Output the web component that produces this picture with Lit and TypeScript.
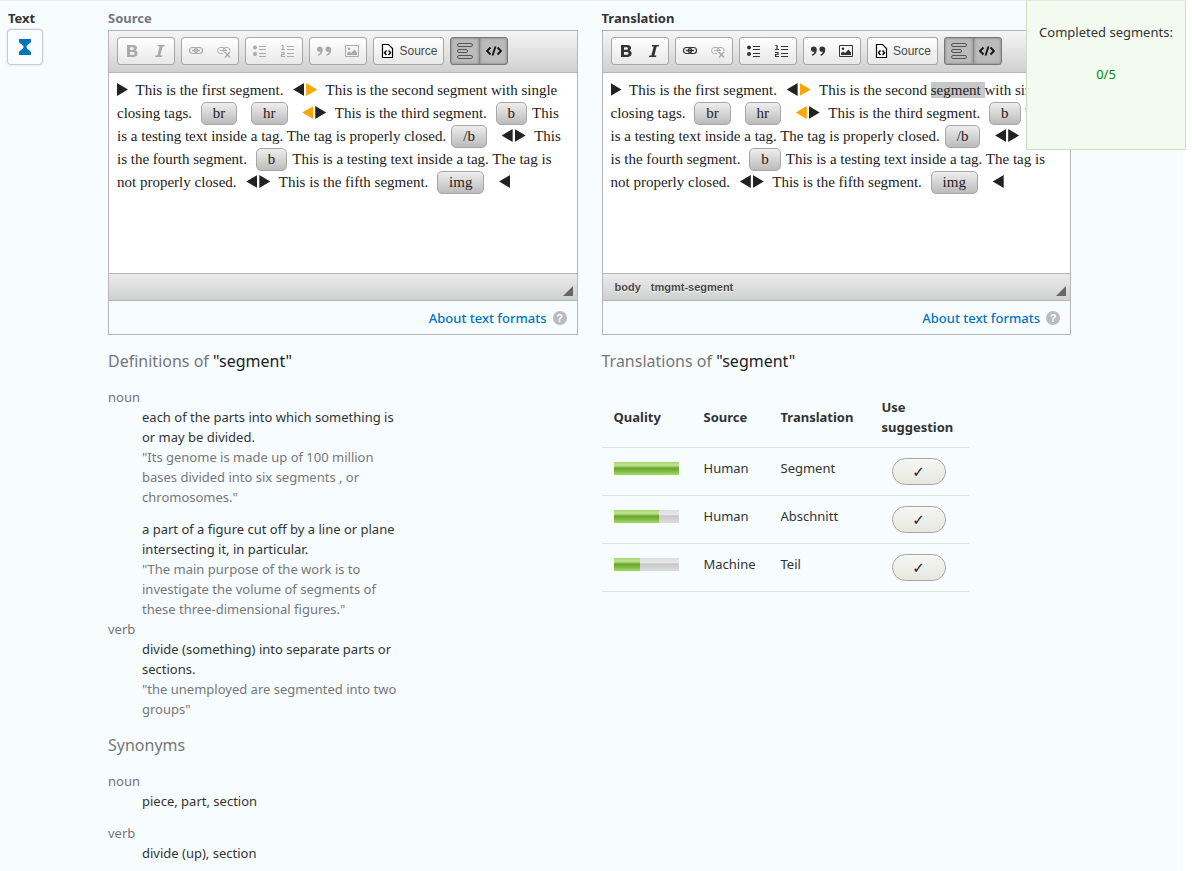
import { LitElement, html, css, svg, nothing, type TemplateResult } from "lit";
import { customElement, property } from "lit/decorators.js";

type Piece = string | TemplateResult;

const icon = (body: unknown) => html`<svg class="icon" viewBox="0 0 16 16" width="16" height="16" aria-hidden="true">${body}</svg>`;

const chain = svg`<g fill="none" stroke="currentColor" stroke-width="1.200"><rect x="1.500" y="4.500" width="8" height="6" rx="3"/><rect x="6.500" y="4.500" width="8" height="6" rx="3"/><path d="M4 7.500h8" stroke-width="1.600"/></g>`;

const icons = {
  bold: icon(svg`<path fill="currentColor" fill-rule="evenodd" d="M3 2h6c2.600 0 4 1.100 4 3 0 1.400-.8 2.200-2 2.600 1.700.3 2.600 1.400 2.600 2.900 0 2.300-1.700 3.500-4.400 3.500H3zM6 4.200v2.600h2.200c1.200 0 1.800-.4 1.800-1.300S9.400 4.200 8.200 4.200zM6 9v2.800h2.500c1.300 0 2-.5 2-1.400S9.800 9 8.500 9z"/>`),
  italic: icon(svg`<path fill="currentColor" d="M6 2h7l-.4 1.500h-1.900L8.300 12.500h2L10 14H3l.4-1.500h1.900L7.700 3.500h-2z"/>`),
  link: icon(chain),
  unlink: icon(svg`<g fill="none" stroke="currentColor"><path d="M7 10.500H4.500a3 3 0 0 1 0-6H7a3 3 0 0 1 2.500 3M9 9.500a3 3 0 0 1-2-2.500 2.800 2.800 0 0 1 3-2.500h1.500a3 3 0 0 1 2.500 3.500M4 7.500h7"/><path d="M9 9l5 5.500M14 9l-5 5.500" stroke-width="1.500"/></g>`),
  bullets: icon(svg`<circle cx="3" cy="4.500" r="2" fill="currentColor"/><circle cx="3" cy="11" r="2" fill="currentColor"/><path d="M7 3.500h7M7 6.500h7M7 10.500h7M7 13.500h7" stroke="currentColor"/>`),
  numbers: icon(svg`<path d="M1.500 2.500h1.500v4M1 6.500h4M1 9.500h3v2H1.500v2H5" fill="none" stroke="currentColor" stroke-width="1.200"/><path d="M7 3.500h7M7 6.500h7M7 10.500h7M7 13.500h7" stroke="currentColor"/>`),
  quote: icon(svg`<path fill="currentColor" d="M3.500 3.500c2 0 3.300 1.200 3.300 3.200 0 3-1.800 5.200-4.500 6l-.5-1c1.600-.7 2.400-1.500 2.500-2.900C2.300 9 .9 8 .9 6.200c0-1.600 1.100-2.700 2.600-2.700zM12 3.500c2 0 3.300 1.200 3.300 3.200 0 3-1.800 5.200-4.500 6l-.5-1c1.600-.7 2.400-1.500 2.500-2.900-2 .2-3.400-.8-3.400-2.600 0-1.600 1.100-2.700 2.600-2.700z"/>`),
  image: icon(svg`<path d="M1.500 2.500h13v11h-13z" fill="none" stroke="currentColor"/><circle cx="5" cy="5.800" r="1.300" fill="currentColor"/><path fill="currentColor" d="M3 12v-2l2-1.500 2 1.500 3.500-3.500L13 9.500V12z"/>`),
  source: icon(svg`<path d="M3.500 1.500h6l4 4v9h-10z" fill="#fff" stroke="#000" stroke-width="1.200"/><path d="M7.500 7.500L5.500 9.800l2 2.200M9.500 7.500l2 2.300-2 2.200" fill="none" stroke="#000" stroke-width="1.400"/>`),
  blocks: icon(svg`<g fill="none" stroke="#555"><rect x=".5" y=".5" width="15" height="3" rx="1.500"/><rect x=".5" y="6.500" width="10" height="3" rx="1.500"/><rect x=".5" y="12.500" width="15" height="3" rx="1.500"/></g>`),
  code: icon(svg`<path d="M4.500 4.500L1 8l3.500 3.500M11.500 4.500L15 8l-3.500 3.500M9.500 3.500l-3 9" fill="none" stroke="#111" stroke-width="1.800"/>`),
};

@customElement("segment-editor")
export class SegmentEditor extends LitElement {
  @property() label = "";
  @property({ type: Boolean }) active = false;
  @property({ attribute: false }) path: string[] = [];
  @property({ attribute: false }) content: Piece | Piece[] = "";

  static styles = css`
    :host { display: block; min-width: 0; }
    h2 { margin: 0; font-size: 13px; line-height: 20px; color: #777; }
    :host([active]) h2 { color: #333; }
    .frame { border: 1px solid #b6b6b6; margin-top: 2px; }
    .toolbar { display: flex; flex-wrap: nowrap; gap: 6px; padding: 6px 8px 7px; border-bottom: 1px solid #b6b6b6; background: linear-gradient(#f5f5f5, #cfd1cf); }
    .group { display: flex; box-sizing: border-box; height: 28px; border: 1px solid #a6a6a6; border-radius: 3px; background: linear-gradient(#fff, #e8e8e8); overflow: hidden; flex: none; }
    button { display: flex; align-items: center; justify-content: center; gap: 4px; width: 28px; padding: 0; border: 0; background: none; color: #333; font: 12px/18px "Liberation Sans", Arial, sans-serif; }
    button:disabled { color: #aaa; }
    button.wide { width: 69px; color: #484848; }
    .group.on { border-color: #777; background: #bbb; }
    .on button { box-shadow: inset 0 0 3px #777; }
    .on button + button { box-sizing: border-box; border-left: 1px solid #888; }
    .body { min-height: 200px; box-sizing: border-box; padding: 6px 8px; background: #fff; color: #222; font: 15px/23px "Liberation Serif", Georgia, serif; white-space: nowrap; overflow: hidden; }
    .status { display: flex; align-items: center; justify-content: space-between; height: 26px; border-top: 1px solid #b6b6b6; border-bottom: 1px solid #b6b6b6; background: linear-gradient(#ebebeb, #cfd1cf); padding: 0 4px 0 12px; }
    .path { display: flex; gap: 10px; color: #484848; font: bold 11px/20px "Liberation Sans", Arial, sans-serif; text-shadow: 0 1px 0 #fff; }
    .grip { width: 0; height: 0; align-self: flex-end; margin-bottom: 4px; border-left: 10px solid transparent; border-bottom: 10px solid #666; }
    .help { display: flex; align-items: center; justify-content: flex-end; gap: 6px; height: 33px; padding: 0 10px; }
    a { color: #0074bd; font-weight: 500; text-decoration: none; }
    .q { width: 14px; height: 14px; border-radius: 50%; background: #bbb; color: #fff; font: bold 11px/14px "Liberation Sans", sans-serif; text-align: center; }
    .tag { display: inline-block; box-sizing: border-box; height: 23px; line-height: 21px; padding: 0 11px; margin: 0 5px; border: 1px solid #a6a6a6; border-radius: 5px; background: linear-gradient(#eee, #bbb); vertical-align: top; }
    .arrow { display: inline-block; width: 11px; height: 13px; margin: 0 1px; background: #222; vertical-align: -1px; }
    .right { clip-path: polygon(0 0, 100% 50%, 0 100%); }
    .left { clip-path: polygon(100% 0, 0 50%, 100% 100%); }
    .orange { background: orange; }
    .pair { margin: 0 4px 0 5px; }
    .lead { margin: 0 3px 0 -1px; }
    mark { background: #c8c8c8; color: inherit; }
  `;

  render() {
    const btn = (name: string, i: unknown, disabled = !this.active) =>
      html`<button type="button" aria-label=${name} ?disabled=${disabled}>${i}</button>`;
    return html`
      <h2>${this.label}</h2>
      <div class="frame">
        <div class="toolbar" role="toolbar" aria-label=${this.label}>
          <div class="group">${btn("Bold", icons.bold)}${btn("Italic", icons.italic)}</div>
          <div class="group">${btn("Link", icons.link)}${btn("Unlink", icons.unlink, true)}</div>
          <div class="group">${btn("Bulleted list", icons.bullets)}${btn("Numbered list", icons.numbers)}</div>
          <div class="group">${btn("Quote", icons.quote)}${btn("Image", icons.image)}</div>
          <div class="group"><button type="button" class="wide">${icons.source}Source</button></div>
          <div class="group on">${btn("Show blocks", icons.blocks, false)}${btn("Show tags", icons.code, false)}</div>
        </div>
        <div class="body">${this.content}</div>
        <div class="status"><div class="path">${this.path.map((p) => html`<span>${p}</span>`)}</div><span class="grip"></span></div>
        <div class="help"><a href="#formats">About text formats</a><span class="q">?</span></div>
      </div>`;
  }
}

const arrow = (dir: string, orange = false) => html`<span class="arrow ${dir} ${orange ? "orange" : ""}"></span>`;
const pair = (l = false, r = false) => html`<span class="pair">${arrow("left", l)}${arrow("right", r)}</span>`;
const tag = (t: string) => html`<span class="tag">${t}</span>`;
const segments = (marked: boolean) => html`<span class="lead">${arrow("right")}</span> This is the first segment. ${pair(false, true)} This is the second ${marked ? html`<mark>segment </mark>` : "segment "}with single<br>closing tags. ${tag("br")} ${tag("hr")} ${pair(true)} This is the third segment. ${tag("b")}This<br>is a testing text inside a tag. The tag is properly closed.${tag("/b")} ${pair()} This<br>is the fourth segment. ${tag("b")}This is a testing text inside a tag. The tag is<br>not properly closed. ${pair()} This is the fifth segment. ${tag("img")} <span class="pair">${arrow("left")}</span>`;

interface Sense { text: string; example?: string }
interface Entry { kind: string; senses: Sense[] }

const definitions: Entry[] = [
  { kind: "noun", senses: [
    { text: "each of the parts into which something is\nor may be divided.", example: '"Its genome is made up of 100 million\nbases divided into six segments , or\nchromosomes."' },
    { text: "a part of a figure cut off by a line or plane\nintersecting it, in particular.", example: '"The main purpose of the work is to\ninvestigate the volume of segments of\nthese three-dimensional figures."' },
  ] },
  { kind: "verb", senses: [
    { text: "divide (something) into separate parts or\nsections.", example: '"the unemployed are segmented into two\ngroups"' },
  ] },
];
const synonyms: Entry[] = [
  { kind: "noun", senses: [{ text: "piece, part, section" }] },
  { kind: "verb", senses: [{ text: "divide (up), section" }] },
];
const suggestions = [
  { quality: 100, source: "Human", text: "Segment" },
  { quality: 70, source: "Human", text: "Abschnitt" },
  { quality: 40, source: "Machine", text: "Teil" },
];

@customElement("app-root")
export class AppRoot extends LitElement {
  static styles = css`
    :host { display: block; position: relative; min-height: 100vh; box-sizing: border-box; background: #fff; color: #333; font: 13px/20px "Noto Sans", "Lucida Grande", sans-serif; }
    .page { box-sizing: border-box; min-height: 100vh; margin-right: 9px; padding: 7px 112px 0 8px; border-top: 1px solid #e8edf0; background: #f7fcff; display: grid; grid-template-columns: 76px minmax(0, 1fr) minmax(0, 1fr); grid-template-rows: auto 1fr; column-gap: 24px; }
    .side h2 { margin: 0; font-size: 13px; line-height: 20px; }
    .review { display: flex; align-items: center; justify-content: center; box-sizing: border-box; width: 36px; height: 36px; padding: 0; margin: 1px 0 0 -1px; border: 1px solid #ccc; border-radius: 4px; background: #f9fdff; box-shadow: 0 0 2px #ccc; }
    .words { grid-column: 2; }
    .matches { grid-column: 3; }
    h3 { margin: 16px 0 16px; font-size: 16px; line-height: 20px; font-weight: 400; color: #777; }
    h3 b { font-weight: 400; color: #222; }
    dl { margin: 0; white-space: pre-line; }
    dt { color: #777; }
    dd { margin: 0 0 0 34px; }
    dd + dd, .spaced dd + dt { margin-top: 12px; }
    .example { color: #777; }
    table { border-collapse: collapse; table-layout: fixed; width: 367px; }
    th, td { padding: 10px 0 10px 12px; text-align: left; vertical-align: top; border-bottom: 1px solid #e0e2dc; line-height: 20px; }
    th { vertical-align: middle; }
    td { height: 27px; }
    .c1 { width: 90px; } .c2 { width: 77px; } .c3 { width: 101px; }
    .meter { width: 65px; height: 13px; margin-top: 4px; background: linear-gradient(#ddd 0, #e8e8e8 35%, #c8c8c8 45%, #ddd 100%); }
    .fill { height: 13px; background: linear-gradient(#a5d66c 0, #bfe696 25%, #6ea52b 48%, #7ab338 65%, #a3d86c 100%); }
    .use { display: flex; align-items: center; justify-content: center; box-sizing: border-box; width: 54px; height: 27px; margin: 0 0 0 10px; padding: 0; border: 1px solid #a6a6a6; border-radius: 14px; background: linear-gradient(#f6f6f3, #e7e7df); color: #222; font: bold 15px/20px "DejaVu Sans", sans-serif; }
    .counter { position: absolute; top: 0; right: 6px; box-sizing: border-box; width: 160px; height: 150px; padding-top: 21px; border: 1px solid #c9e1bd; border-top-color: #e3eae0; background: #f3faef; text-align: center; }
    .counter p { margin: 0 0 22px; }
    .count { color: #008a00; }
  `;

  private entries(list: Entry[], spaced = false) {
    return html`<dl class=${spaced ? "spaced" : ""}>${list.map((e) => html`<dt>${e.kind}</dt>${e.senses.map((s) => html`<dd>${s.text}${s.example ? html`<div class="example">${s.example}</div>` : nothing}</dd>`)}`)}</dl>`;
  }

  render() {
    return html`
      <main class="page">
        <div class="side">
          <h2>Text</h2>
          <button class="review" type="button" aria-label="Needs review">
            <svg width="14" height="16" viewBox="0 0 14 16" aria-hidden="true"><path fill="#0074bd" d="M1.500 0h11q.5 0 .5.500V3c-1 1.500-4.500 3-4.500 5s3.500 3.500 4.500 5v2.500q0 .5-.5.500h-11q-.5 0-.5-.500V13c1-1.500 4.500-3 4.500-5S2 4.500 1 3V.5Q1 0 1.500 0z"/></svg>
          </button>
        </div>
        <segment-editor label="Source" .content=${segments(false)}></segment-editor>
        <segment-editor label="Translation" active .path=${["body", "tmgmt-segment"]} .content=${segments(true)}></segment-editor>
        <section class="words">
          <h3>Definitions of <b>"segment"</b></h3>
          ${this.entries(definitions)}
          <h3>Synonyms</h3>
          ${this.entries(synonyms, true)}
        </section>
        <section class="matches">
          <h3>Translations of <b>"segment"</b></h3>
          <table>
            <colgroup><col class="c1"><col class="c2"><col class="c3"><col></colgroup>
            <thead><tr><th>Quality</th><th>Source</th><th>Translation</th><th>Use suggestion</th></tr></thead>
            <tbody>${suggestions.map((s) => html`<tr>
              <td><div class="meter" role="img" aria-label="${s.quality}%"><div class="fill" style="width:${s.quality}%"></div></div></td>
              <td>${s.source}</td><td>${s.text}</td>
              <td><button class="use" type="button" aria-label="Use ${s.text}">✓</button></td>
            </tr>`)}</tbody>
          </table>
        </section>
      </main>
      <aside class="counter"><p>Completed segments:</p><p class="count">0/5</p></aside>`;
  }
}
